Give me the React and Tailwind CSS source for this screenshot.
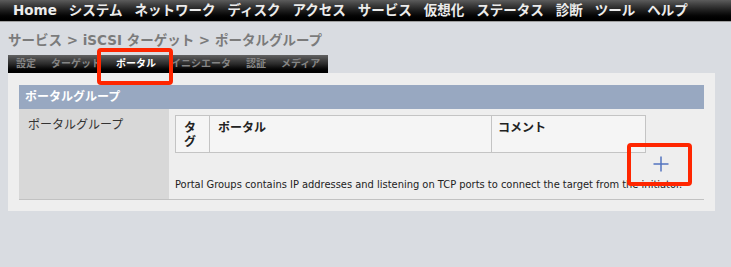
import React from "react";

const jp = { fontFamily: '"DejaVu Sans", "Noto Sans CJK JP", sans-serif' };

export default function App() {
  const menu = ["Home", "システム", "ネットワーク", "ディスク", "アクセス", "サービス", "仮想化", "ステータス", "診断", "ツール", "ヘルプ"];
  const tabs = ["設定", "ターゲット", "ポータル", "イニシエータ", "認証", "メディア"];
  return (
    <div className="relative w-[731px] h-[267px] bg-[#d9dce1] overflow-hidden" style={jp}>
      <div className="h-[22px] flex items-center pl-[13px] gap-[12px] bg-gradient-to-b from-[#5c5c5c] via-[#1e1e1e] to-[#000] border-b border-[#a0a0a0]">
        {menu.map((m) => (
          <span key={m} className="text-[#ececec] font-bold text-[13.5px] leading-none whitespace-nowrap">{m}</span>
        ))}
      </div>
      <div className="px-[8px]">
        <div className="h-[33px] flex items-center pt-[4px] text-[#7b7b7b] font-bold text-[13.5px] whitespace-nowrap">
          サービス &gt; iSCSI ターゲット &gt; ポータルグループ
        </div>
        <div className="w-[320px] h-[18px] flex items-center pl-[8px] gap-[15px] bg-gradient-to-b from-[#626262] via-[#2a2a2a] to-[#000]">
          {tabs.map((t) => (
            <span key={t} className={`text-[10px] font-bold leading-none whitespace-nowrap ${t === "ポータル" ? "text-white" : "text-[#858585]"}`}>{t}</span>
          ))}
        </div>
        <div className="w-[707px] bg-[#eeeeee] pt-[12px] pb-[11px] px-[11px]">
          <div className="h-[24px] bg-[#98a8c1] flex items-center pl-[6px] text-white font-bold text-[12px]">ポータルグループ</div>
          <div className="flex border-b border-[#c2c2c2]">
            <div className="w-[150px] bg-[#d8d8d8] pl-[9px] pt-[7px] text-[12px] text-[#333]">ポータルグループ</div>
            <div className="flex-1 pl-[6px] pt-[6px] pb-[7px]">
              <table className="w-[471px] border border-[#c4c4c4] border-collapse text-[12px] font-bold text-[#222]">
                <thead>
                  <tr className="bg-[#f5f5f5] h-[37px] align-top">
                    <th className="w-[34px] border border-[#c4c4c4] text-left px-[8px] pt-[5px] leading-[14px] font-bold">タ<br />グ</th>
                    <th className="w-[282px] border border-[#c4c4c4] text-left px-[8px] pt-[5px] leading-[14px] font-bold">ポータル</th>
                    <th className="border border-[#c4c4c4] text-left px-[6px] pt-[5px] leading-[14px] font-bold">コメント</th>
                  </tr>
                </thead>
              </table>
              <div className="flex justify-end pr-[34px] h-[18px] mt-[1px]">
                <svg width="18" height="18" viewBox="0 0 18 18" className="mt-[1px]">
                  <path d="M9 1.5v15M1.5 9h15" stroke="#5374c0" strokeWidth="1.5" />
                </svg>
              </div>
              <div className="text-[11px] text-[#222] whitespace-nowrap leading-[14px] mt-[6px]" style={{ fontFamily: '"DejaVu Sans Condensed", "Liberation Sans", sans-serif' }}>
                Portal Groups contains IP addresses and listening on TCP ports to connect the target from the initiator.
              </div>
            </div>
          </div>
        </div>
      </div>
      <div className="absolute left-[97px] top-[48px] w-[76px] h-[37px] border-[4px] border-[#ff2600] rounded-[4px]" />
      <div className="absolute left-[627px] top-[143px] w-[65px] h-[43px] border-[4px] border-[#ff2600] rounded-[4px]" />
    </div>
  );
}
